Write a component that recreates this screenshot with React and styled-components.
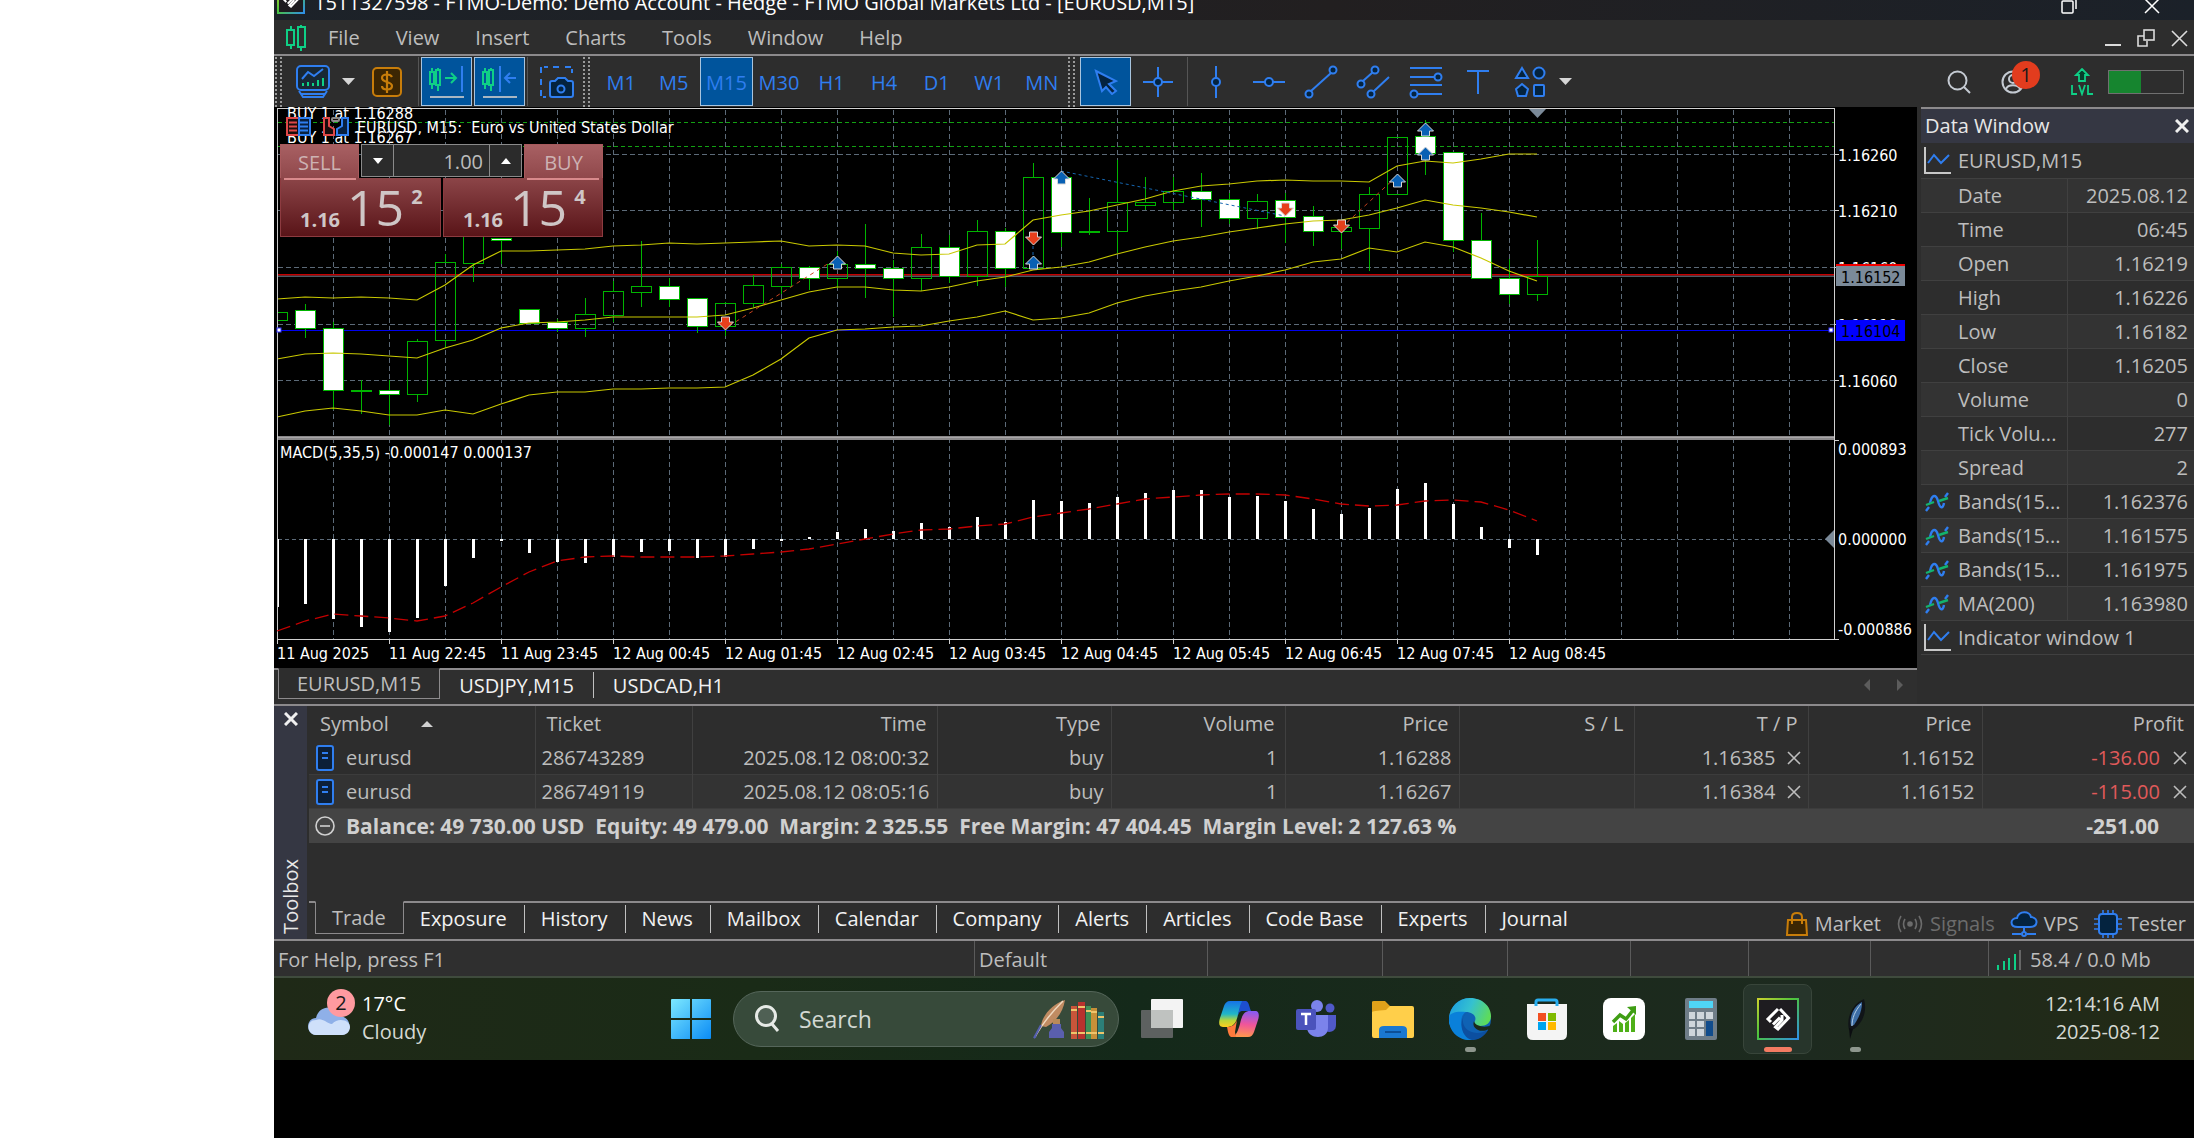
import React from "react";
import styled, { createGlobalStyle, css } from "styled-components";

const UI = `"Open Sans", "Noto Sans", sans-serif`;
const CHART = `"DejaVu Sans Condensed", "DejaVu Sans", sans-serif`;
const C = {
  panel: "#2d2d2d",
  panelAlt: "#333333",
  caption: "#353743",
  line: "#8c8a8c",
  thin: "#404040",
  text: "#bdbdbd",
  bright: "#f2f2f2",
  blue: "#2f7ef0",
  blueFill: "#04233f",
  active: "#00549c",
  green: "#0fcf86",
};

const Global = createGlobalStyle`
  * { box-sizing: border-box; }
  body { margin: 0; background: #fff; font: 20px/28px ${UI}; color: ${C.text}; }
  button, input { font: inherit; color: inherit; margin: 0; padding: 0; border: 0; background: none; border-radius: 0; }
  button { cursor: pointer; }
  a { color: inherit; text-decoration: none; }
  svg { display: block; flex: none; }
  table { border-collapse: collapse; border-spacing: 0; }
  th { font-weight: 400; }
`;

const Shell = styled.div`
  display: flex;
  flex-direction: column;
  min-height: 100vh;
  margin-left: 274px;
  background: #000;
`;

/* ---------- title and menu ---------- */
const TitleBar = styled.header`
  display: flex;
  align-items: flex-end;
  height: 20px;
  padding: 0 30px 6px 3px;
  gap: 9px;
  overflow: hidden;
  color: #fff;
  background: linear-gradient(90deg, #1c2229, #221f20 55%, #1b2129);
`;
const TitleText = styled.span`
  flex: 1;
  line-height: 22px;
  white-space: pre;
`;
const WindowButton = styled.button`
  display: flex;
  padding: 0 4px;
`;
const WindowButtons = styled.div`
  display: flex;
  align-items: flex-end;
  gap: 58px;
`;
const MenuBar = styled.nav`
  display: flex;
  align-items: center;
  height: 36px;
  padding: 2px 6px 0 12px;
  background: ${C.panel};
  border-bottom: 2px solid ${C.line};
`;
const MenuItems = styled.div`
  display: flex;
  flex: 1;
  gap: 36px;
  padding-left: 22px;
`;
const MdiButtons = styled.div`
  display: flex;
  align-items: center;
  gap: 16px;
`;

/* ---------- toolbar ---------- */
const ToolBar = styled.div`
  display: flex;
  align-items: center;
  height: 51px;
  padding: 0 10px 0 1px;
  background: ${C.panel};
`;
const Grip = styled.span`
  width: 7px;
  height: 50px;
  border: 2px dotted #9a9a9a;
  border-width: 0 2px;
  margin: 0 ${(p) => p.$after || 0}px 0 ${(p) => p.$before || 0}px;
`;
const Tool = styled.button`
  display: flex;
  align-items: center;
  justify-content: center;
  height: 49px;
  width: ${(p) => p.$w || 52}px;
  padding-top: ${(p) => (p.$text ? 2 : 0)}px;
  color: ${C.blue};
  border: 1px solid transparent;
  ${(p) => p.$active && css`
    background: ${C.active};
    border-color: #a8c4de;
  `}
`;
const ToolPair = styled.div`
  display: flex;
  gap: 2px;
`;
const Divider = styled.span`
  width: 1px;
  height: 49px;
  margin: 0 2px;
  background: #555;
`;
const EvenTools = styled.div`
  display: grid;
  grid-template-columns: repeat(${(p) => p.$n}, 1fr);
  width: ${(p) => p.$w}px;
  ${Tool} { width: 100%; }
`;
const ToolsEnd = styled.div`
  display: flex;
  align-items: center;
  margin-left: auto;
  gap: 15px;
`;
const Badged = styled.button`
  position: relative;
  display: flex;
  margin: 0 31px 0 15px;
`;
const Badge = styled.span`
  position: absolute;
  top: ${(p) => p.$top}px;
  left: ${(p) => p.$left}px;
  width: 28px;
  height: 28px;
  border-radius: 50%;
  text-align: center;
  background: ${(p) => p.$bg};
  color: #1a1a1a;
`;
const Meter = styled.span`
  width: 76px;
  height: 24px;
  border: 1px solid #707070;
  background: linear-gradient(90deg, #16852f 43%, transparent 43%);
`;

/* ---------- workspace ---------- */
const Workspace = styled.main`
  display: grid;
  grid-template-columns: minmax(0, 1fr) 273px;
  gap: 4px;
  background: ${C.panel};
`;
const ChartColumn = styled.section`
  position: relative;
  background: #000;
`;
const ChartSvg = styled.svg`
  width: 100%;
  height: 561px;
  text { font: 16px ${CHART}; fill: #fff; }
`;
const ChartTabs = styled.div`
  display: flex;
  align-items: flex-start;
  height: 36px;
  background: #2f2f2f;
`;
const TabGap = styled.span`
  width: ${(p) => p.$w ? p.$w + "px" : "auto"};
  flex: ${(p) => (p.$w ? "none" : 1)};
  border-top: 2px solid ${C.line};
  align-self: flex-start;
`;
const ChartTab = styled.button`
  height: ${(p) => (p.$active ? 31 : 34)}px;
  padding: 0 19px;
  border-top: 2px solid ${C.line};
  color: ${C.bright};
  ${(p) => p.$active && css`
    padding: 1px 18px 0;
    color: ${C.text};
    background: ${C.panel};
    border: 1px solid ${C.line};
    border-top-color: transparent;
  `}
`;
const TabRule = styled.span`
  width: 1px;
  height: ${(p) => p.$h}px;
  background: linear-gradient(${C.line} 2px, transparent 2px 4px, #c0c0c0 4px);
`;
const TabScroll = styled.div`
  display: flex;
  gap: 27px;
  padding: 9px 14px 0 0;
  border-top: 2px solid ${C.line};
`;

/* one-click trading panel lies over the chart */
const OneClick = styled.form`
  position: absolute;
  top: 37px;
  left: 6px;
  width: 323px;
  color: #cfc6c6;
`;
const OneClickTop = styled.div`
  display: grid;
  grid-template-columns: 79px 1fr 79px;
  gap: 2px;
  height: 34px;
`;
const SideTab = styled.button`
  height: 34px;
  padding-top: 2px;
  color: #cdb2b3;
  border: 1px solid #a85a5d;
  border-bottom: 0;
  background: linear-gradient(#a86063, #90484b);
`;
const Spinner = styled.div`
  display: grid;
  grid-template-columns: 31px 1fr 31px;
  height: 33px;
  border: 1px solid #8a8a8a;
  background: #2b2b2b;
`;
const SpinButton = styled.button`
  display: flex;
  align-items: center;
  justify-content: center;
`;
const Lots = styled.input`
  width: 100%;
  min-width: 0;
  padding: 2px 6px 0 0;
  text-align: right;
  color: ${C.text};
  border: 1px solid #8a8a8a;
  border-width: 0 1px;
`;
const OneClickPrices = styled.div`
  display: grid;
  grid-template-columns: 161px 160px;
  gap: 2px;
`;
const PriceButton = styled.button`
  display: flex;
  align-items: flex-end;
  height: 59px;
  padding: 0 0 0 19px;
  gap: 7px;
  border: 1px solid #8d3b40;
  border-top: 0;
  background:
    linear-gradient(#d98a8c, #d98a8c) ${(p) => (p.$right ? "calc(100% - 3px)" : "3px")} 0 / 72px 2px no-repeat,
    linear-gradient(#8c4548, #591418);
  font-weight: 700;
`;
const PriceSmall = styled.span`
  line-height: 32px;
`;
const PriceBig = styled.span`
  font-size: 50px;
  line-height: 58px;
  font-weight: 400;
`;
const PriceSup = styled.span`
  align-self: flex-start;
  line-height: 38px;
`;

/* ---------- data window ---------- */
const DataWindow = styled.aside`
  display: flex;
  flex-direction: column;
  background: ${C.panel};
`;
const Caption = styled.div`
  display: flex;
  align-items: center;
  justify-content: space-between;
  height: 37px;
  padding: 0 5px 0 4px;
  color: #e8e8e8;
  background: ${C.caption};
  border-top: 2px solid ${C.line};
  border-bottom: 1px solid ${C.panel};
`;
const DataTable = styled.table`
  width: 100%;
  table-layout: fixed;
  tr { height: 34px; border-bottom: 1px solid ${C.thin}; }
  tr:nth-child(even) { background: ${C.panelAlt}; }
  th { text-align: left; }
`;
const DataCell = styled.td`
  padding: 1px 6px 0 0;
  text-align: right;
  border-left: 1px solid ${C.thin};
`;
const DataHead = styled.th`
  padding: 1px 0 0 3px;
`;
const HeadInner = styled.span`
  display: grid;
  grid-template-columns: 27px 1fr;
  gap: 7px;
  align-items: center;
  white-space: nowrap;
`;

/* ---------- toolbox ---------- */
const Toolbox = styled.section`
  display: grid;
  grid-template-columns: 33px minmax(0, 1fr);
  gap: 2px;
  height: 235px;
  background: ${C.panel};
  border-top: 2px solid ${C.line};
`;
const Strip = styled.div`
  display: flex;
  flex-direction: column;
  align-items: center;
  justify-content: space-between;
  padding: 6px 0 5px;
  color: #e8e8e8;
  background: ${C.caption};
`;
const Vertical = styled.span`
  writing-mode: vertical-rl;
  transform: rotate(180deg);
`;
const ToolboxBody = styled.div`
  display: flex;
  flex-direction: column;
  justify-content: space-between;
`;
const Trades = styled.table`
  width: 100%;
  table-layout: fixed;
  tr { height: 34px; }
  tbody tr:nth-child(even) { background: ${C.panelAlt}; }
  tbody tr { border-bottom: 1px solid #3c3c3c; }
`;
const Th = styled.th`
  padding: 2px 10px 0 11px;
  text-align: ${(p) => (p.$left ? "left" : "right")};
  & + & { border-left: 1px solid ${C.thin}; }
`;
const Td = styled.td`
  padding: 2px 7px 0 6px;
  text-align: ${(p) => (p.$left ? "left" : "right")};
  color: ${(p) => (p.$loss ? "#e05a5a" : "inherit")};
  & + & { border-left: 1px solid ${C.thin}; }
`;
const Inline = styled.span`
  display: flex;
  align-items: center;
  justify-content: ${(p) => (p.$end ? "flex-end" : "flex-start")};
  gap: ${(p) => p.$gap || 8}px;
`;
const Summary = styled.tfoot`
  background: #444;
  font-size: 21px;
  font-weight: 700;
  color: #d0d0d0;
  tr { height: 35px; }
  td { padding: 0 35px 0 6px; text-align: right; white-space: pre; }
`;
const CloseMark = styled.button`
  display: flex;
  color: ${C.text};
`;
const BottomTabs = styled.div`
  display: flex;
  height: 38px;
  align-items: flex-start;
  background: #2d2d2d;
`;
const BottomTab = styled.button`
  height: ${(p) => (p.$active ? 33 : 36)}px;
  padding: 0 17px 2px 16px;
  color: ${C.bright};
  border-top: 2px solid ${C.line};
  ${(p) => p.$active && css`
    padding-bottom: 0;
    color: ${C.text};
    border: 1px solid ${C.line};
    border-top-color: transparent;
  `}
`;
const Services = styled.div`
  display: flex;
  flex: 1;
  justify-content: flex-end;
  gap: 15px;
  padding: 7px 8px 0 0;
  border-top: 2px solid ${C.line};
`;
const Service = styled.a`
  display: flex;
  align-items: center;
  gap: 6px;
  color: ${(p) => (p.$off ? "#6c6c6c" : C.text)};
`;

/* ---------- status ---------- */
const Status = styled.footer`
  display: grid;
  grid-template-columns: 700px 233px 175px 125px 123px 118px 122px 118px 1fr;
  height: 39px;
  background: #2f2f2f;
  border-top: 2px solid ${C.line};
  border-bottom: 2px solid #3f4b3d;
`;
const StatusCell = styled.span`
  display: flex;
  align-items: center;
  gap: 9px;
  padding: 2px 0 0 ${(p) => p.$pad || 4}px;
  & + & { border-left: 1px solid #5a5a5a; }
`;

/* ---------- taskbar ---------- */
const TaskBar = styled.nav`
  display: flex;
  align-items: center;
  height: 82px;
  padding: 0 34px;
  color: #fff;
  background: linear-gradient(90deg, #1f2917, #1a2b17 25%, #14291a 45%, #1b2a1c 65%, #1d2a1f 80%, #232a15);
`;
const Weather = styled.button`
  display: flex;
  align-items: center;
  gap: 12px;
  width: 348px;
  text-align: left;
`;
const WeatherIcon = styled.span`
  position: relative;
  width: 42px;
  padding-top: 4px;
`;
const Lines = styled.span`
  display: grid;
  padding-bottom: 2px;
  line-height: 28px;
  color: ${(p) => p.$c || "#d5d9d3"};
  text-align: ${(p) => p.$align || "left"};
  strong { font-weight: 400; color: ${(p) => p.$c || "#fff"}; }
`;
const Apps = styled.div`
  display: flex;
  align-items: center;
  gap: 8px;
`;
const AppTile = styled.button`
  position: relative;
  display: flex;
  align-items: center;
  justify-content: center;
  width: 69px;
  height: 70px;
  border-radius: 8px;
  border: 1px solid ${(p) => (p.$current ? "#38453a" : "transparent")};
  background: ${(p) => (p.$current ? "#27352b" : "none")};
`;
const RunMark = styled.span`
  position: absolute;
  bottom: 1px;
  left: 50%;
  width: ${(p) => (p.$current ? 28 : 11)}px;
  height: 5px;
  margin-left: ${(p) => (p.$current ? -14 : -5)}px;
  border-radius: 3px;
  background: ${(p) => (p.$current ? "#f47b62" : "#8d968d")};
`;
const Search = styled.label`
  display: flex;
  align-items: center;
  gap: 19px;
  width: 386px;
  height: 56px;
  padding: 0 14px 0 20px;
  border-radius: 28px;
  border: 1px solid #55665a;
  background: #374a3a;
`;
const SearchInput = styled.input`
  flex: 1;
  min-width: 0;
  font-size: 23px;
  &::placeholder { color: #d2d8d2; opacity: 1; }
`;
const Clock = styled.div`
  margin-left: auto;
`;

/* ---------- icons ---------- */
const Icon = ({ w, h, children, ...p }) => (
  <svg width={w} height={h} viewBox={`0 0 ${w} ${h}`} fill="none" stroke="currentColor" strokeWidth="2" aria-hidden="true" {...p}>{children}</svg>
);
const Cross = ({ s = 14, sw = 2, ...p }) => (
  <Icon w={s} h={s} strokeWidth={sw} {...p}><path d={`M1 1L${s - 1} ${s - 1}M${s - 1} 1L1 ${s - 1}`} /></Icon>
);
const Caret = ({ c = "#d6d6d6", w = 13, h = 7, dir = "down" }) => {
  const d = { down: `M0 0H${w}L${w / 2} ${h}Z`, up: `M0 ${h}H${w}L${w / 2} 0Z`, left: `M${w} 0V${h}L0 ${h / 2}Z`, right: `M0 0V${h}L${w} ${h / 2}Z` };
  return <Icon w={w} h={h} stroke="none" fill={c}><path d={d[dir]} /></Icon>;
};
const MiniCandles = ({ x = 0, y = 0 }) => (
  <g transform={`translate(${x} ${y})`} stroke={C.green} strokeWidth="2">
    <path d="M3 0V3M3 16V21M9 0V2M9 18V23" /><rect x="1" y="4" width="4" height="12" /><rect x="7" y="2" width="4" height="15" />
  </g>
);
const FtmoMark = ({ w, h, id }) => (
  <Icon w={w} h={h} stroke="none">
    <defs><linearGradient id={id} x1="0" y1="0" x2="1" y2="1"><stop offset="0" stopColor="#c9d22e" /><stop offset=".45" stopColor="#4cc43c" /><stop offset="1" stopColor="#2f8fe8" /></linearGradient></defs>
    <rect x="1" y="1" width={w - 2} height={h - 2} fill="#1e1c20" stroke={`url(#${id})`} strokeWidth="2" />
    <g transform={`translate(${w / 2} ${h / 2}) scale(${w / 42})`} stroke="#fff" strokeWidth="3">
      <path d="M0 -10L-10 0L-7 3M-5 5.500L2 -1.500M2 -10L10.500 -1L0 10L-2.500 8L4 1V-4" />
    </g>
  </Icon>
);

/* ---------- chart data ---------- */
const bx = (k) => 277 + 28 * k;
// [body top, body bottom, wick top, wick bottom, filled]
const candles = [
  [312, 320, 312, 320, 0], [310, 328, 304, 338, 1], [328, 390, 322, 410, 1], [390, 391, 380, 414, 0], [390, 394, 380, 425, 1],
  [341, 394, 339, 402, 0], [262, 340, 254, 348, 0], [200, 263, 200, 282, 0], [238, 240, 238, 264, 1], [309, 323, 309, 324, 1],
  [322, 328, 319, 332, 1], [314, 328, 298, 337, 0], [291, 315, 281, 322, 0], [286, 292, 241, 307, 0], [286, 299, 278, 307, 1],
  [298, 326, 298, 333, 1], [303, 326, 302, 336, 0], [285, 303, 275, 307, 0], [267, 286, 264, 294, 0], [267, 278, 266, 290, 1],
  [264, 278, 251, 288, 0], [264, 268, 224, 298, 1], [268, 278, 260, 317, 1], [247, 278, 234, 291, 0], [247, 276, 235, 283, 1],
  [231, 276, 220, 286, 0], [231, 268, 228, 287, 1], [177, 268, 163, 268, 0], [177, 232, 172, 247, 1], [231, 232, 198, 235, 0],
  [202, 231, 160, 253, 0], [202, 205, 177, 210, 0], [191, 202, 177, 210, 0], [191, 199, 173, 227, 1], [199, 218, 193, 224, 1],
  [201, 218, 194, 229, 0], [200, 217, 193, 243, 1], [216, 231, 206, 246, 1], [227, 231, 220, 249, 0], [194, 228, 187, 271, 0],
  [137, 194, 137, 194, 0], [136, 153, 120, 175, 1], [152, 240, 152, 252, 1], [240, 278, 213, 279, 1], [278, 294, 259, 304, 1], [276, 294, 240, 301, 0],
];
const upper = [299, 297, 298, 297, 298, 300, 285, 265, 251, 251, 250, 249, 246, 245, 243, 244, 243, 242, 241, 246, 245, 246, 253, 255, 254, 245, 244, 220, 215, 211, 205, 199, 191, 186, 184, 181, 180, 181, 181, 182, 166, 161, 163, 159, 154, 154];
const middle = [359, 354, 353, 354, 356, 358, 348, 340, 328, 323, 322, 320, 317, 317, 317, 317, 315, 308, 300, 292, 287, 287, 290, 291, 287, 281, 277, 270, 267, 262, 254, 247, 241, 237, 232, 228, 224, 221, 220, 215, 208, 200, 205, 208, 212, 217];
const lower = [417, 411, 408, 411, 415, 415, 410, 414, 404, 395, 392, 392, 389, 389, 388, 388, 387, 375, 359, 338, 330, 329, 327, 326, 321, 317, 311, 320, 318, 313, 303, 296, 291, 287, 281, 276, 270, 262, 259, 248, 252, 242, 247, 258, 271, 281];
const macd = [607, 604, 619, 627, 632, 618, 586, 558, 541, 553, 562, 563, 557, 552, 551, 558, 557, 549, 541, 537, 532, 529, 531, 523, 527, 517, 522, 500, 501, 503, 497, 493, 490, 490, 497, 496, 501, 509, 514, 508, 489, 483, 504, 527, 548, 555];
const signal = [631, 621, 614, 616, 618, 621, 616, 603, 587, 572, 561, 557, 556, 557, 557, 557, 556, 554, 552, 549, 544, 539, 534, 530, 529, 526, 524, 517, 513, 509, 504, 499, 497, 495, 494, 494, 495, 499, 504, 506, 505, 501, 500, 502, 510, 521];
const line = (ys) => ys.map((y, k) => `${bx(k)},${y}`).join(" ");
const times = ["11 Aug 2025", "11 Aug 22:45", "11 Aug 23:45", "12 Aug 00:45", "12 Aug 01:45", "12 Aug 02:45", "12 Aug 03:45", "12 Aug 04:45", "12 Aug 05:45", "12 Aug 06:45", "12 Aug 07:45", "12 Aug 08:45"];
const deals = [[725, 323, 0], [837, 263, 1], [1061, 178, 1], [1033, 238, 0], [1033, 263, 1], [1285, 209, 0], [1341, 226, 0], [1397, 181, 1], [1425, 130, 1], [1425, 154, 1]];
const priceAxis = [[154, "1.16260"], [210, "1.16210"], [267, "1.16160"], [324, "1.16110"], [380, "1.16060"]];

const Deal = ({ x, y, up }) => (
  <path transform={`translate(${x} ${y})${up ? "" : " scale(1 -1)"}`} d="M0 -7L8 1H4V6H-4V1H-8Z" fill={up ? "#0860b4" : "#e63f1c"} stroke="#d8d8d8" strokeWidth="1" />
);

function Chart() {
  return (
    <ChartSvg viewBox="274 107 1643 561" preserveAspectRatio="xMinYMin meet" role="img" aria-label="EURUSD M15 candlestick chart with MACD">
      <g shapeRendering="crispEdges">
        <g stroke="#5c6a78" strokeWidth="1" strokeDasharray="5 3">
          {Array.from({ length: 27 }, (_, i) => <path key={i} d={`M${333.5 + 56 * i} 110V639`} />)}
          {priceAxis.map(([y]) => <path key={y} d={`M278 ${y + 0.5}H1834`} />)}
          <path d="M278 539.5H1834" strokeDasharray="4 3" />
        </g>
        <g stroke="#12a012" strokeWidth="1" strokeDasharray="4 3"><path d="M278 122.5H1834M278 146.5H1834" /></g>
        <path d="M278 274.5H1834" stroke="#c40000" />
        <path d="M278 275.5H1834" stroke="#6e2024" />
        <path d="M278 276.5H1834" stroke="#4c5a66" />
        <path d="M278 330.5H1834" stroke="#0000f0" />
        <g stroke="#00b400" strokeWidth="1">
          {candles.map(([t, b, wt, wb, f], k) => (
            <g key={k}>
              <path d={`M${bx(k) + 0.5} ${wt}V${t}M${bx(k) + 0.5} ${b}V${wb}`} strokeWidth="1" />
              <rect x={k ? bx(k) - 9.5 : 277.5} y={t + 0.5} width={k ? 20 : 10} height={Math.max(b - t, 1)} fill={f ? "#fff" : "#000"} fillOpacity={f ? 1 : 0} />
            </g>
          ))}
        </g>
      </g>
      <g stroke="#c8c800" strokeWidth="1.2" fill="none">
        {[upper, middle, lower].map((ys, i) => <polyline key={i} points={line(ys)} />)}
      </g>
      <path d="M729 326L837 258M1341 228L1397 176" stroke="#c8431f" strokeDasharray="4 4" />
      <path d="M1061 171L1285 216M1033 246V257" stroke="#1666b0" strokeDasharray="3 3" />
      {deals.map(([x, y, up], i) => <Deal key={i} x={x + 0.5} y={y} up={up} />)}

      <g shapeRendering="crispEdges">
        <g fill="#fff">
          {macd.map((y, k) => <rect key={k} x={k ? bx(k) - 1 : 277} y={Math.min(y, 539)} width={k ? 3 : 2} height={Math.max(Math.abs(y - 539), 1)} />)}
        </g>
        <rect x="277" y="436" width="1558" height="4" fill="#8a888a" />
        <path d="M277 437.5H1835" stroke="#a8a6a8" />
        <path d="M277.5 109V639" stroke="#c8c8c8" />
        <path d="M277 108.5H1835M1834.5 108V640M277 639.5H1839M1834 440.5H1839" stroke="#d0d0d0" />
        <path d="M1834 154.5H1839M1834 210.5H1839M1834 267.5H1839M1834 324.5H1839M1834 380.5H1839" stroke="#d0d0d0" />
        {times.map((t, i) => <path key={t} d={`M${277.5 + 112 * i} 640V644`} stroke="#d0d0d0" />)}
      </g>
      <polyline points={line(signal)} fill="none" stroke="#c40000" strokeWidth="1.3" strokeDasharray="14 6" />
      <path d="M1529 109H1546L1537.500 118Z" fill="#7b8a99" />
      <path d="M1834 530V548L1825 539Z" fill="#7b8a99" />
      <rect x="277" y="328" width="4" height="4" fill="#fff" stroke="#3030ff" />
      <rect x="1829" y="328" width="4" height="4" fill="#fff" stroke="#3030ff" />

      {priceAxis.map(([y, t]) => <text key={t} x="1838" y={y + 7}>{t}</text>)}
      <rect x="1836" y="265" width="69" height="21" fill="#7b8a99" />
      <rect x="1836" y="264" width="69" height="2" fill="#f00000" />
      <text x="1841" y="283" style={{ fill: "#000" }}>1.16152</text>
      <rect x="1836" y="320" width="69" height="21" fill="#0000ff" />
      <text x="1841" y="337" style={{ fill: "#000" }}>1.16104</text>
      <text x="1838" y="455">0.000893</text>
      <text x="1838" y="545">0.000000</text>
      <text x="1838" y="635">-0.000886</text>
      <text x="280" y="458">MACD(5,35,5) -0.000147 0.000137</text>
      {times.map((t, i) => <text key={t} x={277 + 112 * i} y="659">{t}</text>)}

      <text x="287" y="119">BUY 1 at 1.16288</text>
      <text x="287" y="143">BUY 1 at 1.16267</text>
      <g strokeWidth="2" fill="#1a0d0d">
        <path d="M298 118H287V135H298" stroke="#e04848" /><path d="M299 118H310V135H299Z" stroke={C.blue} fill="#082040" />
        <path d="M289 122.500H297M289 126.500H297M289 130.500H297" stroke="#e04848" /><path d="M300 122.500H308M300 126.500H308M300 130.500H308" stroke={C.blue} />
        <path d="M324 118H329V126L334 129V135H324Z" stroke="#e04848" /><path d="M348 118H342V126L337 129V135H348Z" stroke={C.blue} fill="#082040" />
        <rect x="332" y="118" width="7" height="3" rx="1" stroke="#8a8a8a" />
      </g>
      <text x="357" y="133" xmlSpace="preserve">EURUSD, M15:  Euro vs United States Dollar</text>
    </ChartSvg>
  );
}

/* ---------- content ---------- */
const frames = ["M1", "M5", "M15", "M30", "H1", "H4", "D1", "W1", "MN"];
const dataRows = [
  ["Date", "2025.08.12"], ["Time", "06:45"], ["Open", "1.16219"], ["High", "1.16226"], ["Low", "1.16182"], ["Close", "1.16205"],
  ["Volume", "0"], ["Tick Volu...", "277"], ["Spread", "2"], ["Bands(15...", "1.162376", 1], ["Bands(15...", "1.161575", 1], ["Bands(15...", "1.161975", 1], ["MA(200)", "1.163980", 1],
];
const positions = [
  ["286743289", "2025.08.12 08:00:32", "1.16288", "1.16385", "-136.00"],
  ["286749119", "2025.08.12 08:05:16", "1.16267", "1.16384", "-115.00"],
];
const heads = ["Time", "Type", "Volume", "Price", "S / L", "T / P", "Price", "Profit"];
const colWidths = [226, 157, 245, 174, 174, 174, 175, 174, 174];
const bottomTabs = ["Exposure", "History", "News", "Mailbox", "Calendar", "Company", "Alerts", "Articles", "Code Base", "Experts", "Journal"];

const WindowIcon = () => (
  <Icon w={27} h={28} stroke="#c8c8c8"><path d="M1 0V26H27" /><path d="M4 16L10 8L17 16L25 8" stroke={C.blue} /></Icon>
);
const BandIcon = () => (
  <Icon w={26} h={22} strokeWidth="2.400"><path d="M2 20L5 16M6 12C8 3 12 3 14 10C16 18 19 18 20 12M21 6L24 2" stroke={C.blue} /><path d="M2 14L10 11M15 10L24 7" stroke="#13b36d" /></Icon>
);

const drawTools = [
  ["Vertical line", <Icon w={34} h={34} key="v"><path d="M17 1V13M17 21V33" /><circle cx="17" cy="17" r="4" fill={C.blueFill} /></Icon>],
  ["Horizontal line", <Icon w={34} h={34} key="h"><path d="M1 17H13M21 17H33" /><circle cx="17" cy="17" r="4" fill={C.blueFill} /></Icon>],
  ["Trendline", <Icon w={34} h={34} key="t"><path d="M7 26L27 8" /><circle cx="5" cy="29" r="3.500" fill={C.blueFill} /><circle cx="29" cy="5" r="3.500" fill={C.blueFill} /></Icon>],
  ["Channel", <Icon w={34} h={34} key="c"><path d="M7 16L17 7M17 27L33 12" /><circle cx="5" cy="19" r="3.500" fill={C.blueFill} /><circle cx="19" cy="5" r="3.500" fill={C.blueFill} /><circle cx="15" cy="29" r="3.500" fill={C.blueFill} /></Icon>],
  ["Fibonacci", <Icon w={34} h={34} key="f"><path d="M1 3H33M1 12H25M1 20H33M9 29H33" /><circle cx="29" cy="12" r="3.500" fill={C.blueFill} /><circle cx="5" cy="29" r="3.500" fill={C.blueFill} /></Icon>],
  ["Text", <Icon w={34} h={34} key="x"><path d="M6 6H28M17 6V29" /></Icon>],
  ["Shapes", <Icon w={34} h={34} key="s" fill={C.blueFill}><path d="M8 3L14 13H2ZM8 19L14 24L12 31H4L2 24Z" /><circle cx="25" cy="8" r="5.500" /><rect x="20" y="20" width="10" height="11" rx="1" /></Icon>],
];

const appIcons = [
  ["Task View", <Icon w={42} h={42} key="a" stroke="none"><rect x="0" y="12" width="32" height="28" rx="1" fill="#5d6160" /><rect x="10" y="1" width="32" height="29" rx="1" fill="#f3f3f3" /><rect x="10" y="12" width="22" height="18" fill="#bfc2c0" /></Icon>],
  ["Copilot", <Icon w={42} h={42} key="b" stroke="none">
    <defs>
      <linearGradient id="cp1" x1="0" y1="0" x2="0" y2="1"><stop offset="0" stopColor="#1672e8" /><stop offset=".5" stopColor="#1fb6c8" /><stop offset=".75" stopColor="#b9d53a" /><stop offset="1" stopColor="#ffcf1f" /></linearGradient>
      <linearGradient id="cp2" x1="0.400" y1="0" x2="0.300" y2="1"><stop offset="0" stopColor="#8a5bf0" /><stop offset=".5" stopColor="#f0559a" /><stop offset="1" stopColor="#ff9a4a" /></linearGradient>
    </defs>
    <path d="M12 3H27C23 5 22 10 20 17C18 25 16 28 10 29H5C0 29 1 23 2 20L6 8C7 5 9 3 12 3Z" fill="url(#cp1)" />
    <path d="M24 3H28C31 4 31 8 33 13H24C21 13 20 17 19 20L22 8C23 5 24 4 24 3Z" fill="#1d4fd0" />
    <path d="M30 39H14C18 38 20 33 22 26C24 17 26 13 32 13H37C42 13 41 19 40 22L36 34C35 37 33 39 30 39Z" fill="url(#cp2)" />
    <path d="M18 39H13C10 37 10 33 9 29C14 29 17 27 19 22L17 34Z" fill="#ff7a3c" />
  </Icon>],
  ["Teams", <Icon w={42} h={42} key="c" stroke="none"><circle cx="22" cy="8" r="6" fill="#7b83eb" /><circle cx="35" cy="10" r="4.500" fill="#5059c9" /><path d="M30 17H41V27C41 34 34 35 31 33Z" fill="#5059c9" /><path d="M12 17H33V30C33 42 13 42 12 30Z" fill="#7b83eb" /><rect x="1" y="11" width="20" height="21" rx="2" fill="#4b53bc" /><path d="M6 16H16M11 16V27" stroke="#fff" strokeWidth="2.500" /></Icon>],
  ["File Explorer", <Icon w={42} h={42} key="d" stroke="none"><path d="M0 4Q0 3 2 3H13L18 8H38V14H0Z" fill="#e0a11a" /><path d="M0 14Q0 13 14 12L18 8H40Q42 8 42 10V38Q42 40 40 40H2Q0 40 0 38Z" fill="#ffcf4a" /><path d="M7 40V32Q7 28 12 28H30Q35 28 35 32V40Z" fill="#1a78d0" /><path d="M13 34H29" stroke="#0c4f96" strokeWidth="2" /></Icon>],
  ["Edge", <Icon w={42} h={42} key="e" stroke="none">
    <defs><linearGradient id="ed1" x1="0" y1="0.200" x2="1" y2="0.500"><stop offset="0" stopColor="#1b9de2" /><stop offset=".5" stopColor="#35c1d0" /><stop offset="1" stopColor="#5edb5a" /></linearGradient></defs>
    <circle cx="21" cy="21" r="21" fill="#0f62b4" />
    <path d="M0 20C1 8 10 0 21 0C34 0 42 9 42 18C42 25 37 28 31 28C26 28 24 26 26 23C28 18 23 14 17 14C9 14 2 20 0 27Z" fill="url(#ed1)" />
    <path d="M0 20C0 14 9 13 17 14C11 17 11 28 15 34C18 38 22 41 25 42C10 44 -1 33 0 20Z" fill="#0a80da" />
    <path d="M17 15C10 22 15 35 28 35C33 35 36 33 39 32C35 39 29 42 23 42C14 40 8 26 17 15Z" fill="#0c4fa0" />
    <path d="M25 23C22 30 31 36 40 31L42 27C38 30 26 29 25 23Z" fill="#1b2a1c" />
  </Icon>, 1],
  ["Microsoft Store", <Icon w={42} h={42} key="f" stroke="none"><path d="M10 10V4Q10 2 12 2H29Q31 2 31 4V10" stroke="#29aef0" strokeWidth="3" /><path d="M1 6H41V36Q41 42 35 42H7Q1 42 1 36Z" fill="#f4f4f4" /><path d="M10 6V8M31 6V8" stroke="#29aef0" strokeWidth="3" /><path d="M12 15H20V23H12Z" fill="#f25022" /><path d="M22 15H30V23H22Z" fill="#7fba00" /><path d="M12 24H20V32H12Z" fill="#00a4ef" /><path d="M22 24H30V32H22Z" fill="#ffb900" /></Icon>],
  ["Trading app", <Icon w={42} h={42} key="g" stroke="none"><rect width="42" height="42" rx="8" fill="#fff" /><path d="M10 24L17 17L23 21L31 11" stroke="#3f9e14" strokeWidth="3.500" /><path d="M24 9L33 8V17Z" fill="#3f9e14" /><path d="M10 34V28L14 25V34ZM16 34V23L20 26V34ZM22 34V25L26 22V34ZM28 34V20L32 16V34Z" fill="#4fb018" /></Icon>],
  ["Calculator", <Icon w={32} h={42} key="h" stroke="none"><rect width="32" height="42" rx="2" fill="#6f7d88" /><rect x="4" y="3" width="24" height="7" fill="#4fd5f7" /><path d="M4 14H10V21H4ZM12 14H19V21H12ZM21 14H28V21H21ZM4 23H10V29H4ZM12 23H19V29H12ZM4 31H10V38H4ZM12 31H19V38H12Z" fill="#cfd6dc" /><rect x="21" y="23" width="7" height="15" fill="#114c8c" /></Icon>],
  ["MetaTrader", <FtmoMark key="i" w={42} h={42} id="fm2" />, 2],
  ["Quill", <Icon w={22} h={42} key="j" stroke="none"><path d="M20 1C23 12 20 24 10 31L5 32C2 20 8 6 20 1Z" fill="#101418" /><path d="M18 4C10 8 5 18 7 28L10 27C16 18 18 12 18 4Z" fill="#3d6ea6" /><path d="M17 6C11 13 8 20 8 28" stroke="#b5cfe6" strokeWidth="1" /><path d="M5 30L6 41L9 31Z" fill="#0b0d10" /></Icon>, 1],
];

export default function App() {
  return (
    <>
      <Global />
      <Shell>
        <TitleBar>
          <FtmoMark w={28} h={28} id="fm1" />
          <TitleText>1511327598 - FTMO-Demo: Demo Account - Hedge - FTMO Global Markets Ltd - [EURUSD,M15]</TitleText>
          <WindowButtons>
            <WindowButton aria-label="Restore window"><Icon w={17} h={17} strokeWidth="1.500"><rect x="1" y="4" width="11" height="12" rx="1" /><path d="M5 1H13Q15 1 15 4V12" /></Icon></WindowButton>
            <WindowButton aria-label="Close window"><Cross s={16} sw={1.5} /></WindowButton>
          </WindowButtons>
        </TitleBar>

        <MenuBar aria-label="Menu">
          <Icon w={20} h={26} stroke={C.green}><path d="M5 1V5M5 20V24M15 0V2M15 22V26" /><rect x="1" y="5" width="7" height="15" /><rect x="12" y="2" width="7" height="20" /></Icon>
          <MenuItems>{["File", "View", "Insert", "Charts", "Tools", "Window", "Help"].map((m) => <button key={m}>{m}</button>)}</MenuItems>
          <MdiButtons>
            <button aria-label="Minimize chart"><Icon w={16} h={16} stroke="#dcdcdc"><path d="M0 15H16" /></Icon></button>
            <button aria-label="Restore chart"><Icon w={18} h={18} stroke="#dcdcdc" strokeWidth="1.600"><path d="M7 7H1V17H10V12" /><rect x="7" y="1" width="10" height="10" /></Icon></button>
            <button aria-label="Close chart"><Cross s={17} sw={1.6} color="#dcdcdc" /></button>
          </MdiButtons>
        </MenuBar>

        <ToolBar>
          <Grip $after={5} />
          <Tool $w={51} aria-label="Chart type">
            <Icon w={34} h={34}><rect x="1" y="1" width="32" height="24" rx="4" fill={C.blueFill} fillOpacity=".5" /><path d="M3 26L7 32H27L31 26M5 29H29" /><path d="M6 14L12 7L18 11L27 4" /><path d="M7 21V18M12 21V17M17 21V18M22 21V15M27 21V13" stroke={C.green} /></Icon>
          </Tool>
          <Tool $w={20} aria-label="Chart type menu"><Caret /></Tool>
          <Tool $w={58} aria-label="Symbols">
            <Icon w={30} h={30} stroke="#c87d0a"><rect x="1" y="1" width="28" height="28" rx="4" fill="#3c2603" /><path d="M20 10C19 8 17 7.500 15 7.500C12 7.500 10 9 10 11C10 16 20 14 20 19C20 21.500 18 22.500 15 22.500C12 22.500 10 21 10 19M15 4V26" strokeWidth="2.200" /></Icon>
          </Tool>
          <Divider />
          <ToolPair>
            <Tool $w={51} $active aria-label="Auto scroll"><Icon w={36} h={34}><MiniCandles y={3} /><path d="M16 13H27M22 8L27 13L22 18" stroke={C.green} /><path d="M33 1V27" /><path d="M1 32H35" stroke="#a9b6c2" /></Icon></Tool>
            <Tool $w={51} $active aria-label="Chart shift"><Icon w={36} h={34}><MiniCandles y={3} /><path d="M18 1V27M34 13H23M28 8L23 13L28 18" /><path d="M1 32H35" stroke="#a9b6c2" /></Icon></Tool>
          </ToolPair>
          <Divider />
          <Tool $w={53} aria-label="Screenshot">
            <Icon w={34} h={34}><path d="M1 8V2H8M13 2H20M25 2H32V8M1 14V20M1 25V32H6" strokeDasharray="6 3" /><path d="M10 18Q10 16 12 16H15L18 13H25L28 16H31Q33 16 33 18V30Q33 32 31 32H12Q10 32 10 30Z" fill={C.blueFill} /><circle cx="21" cy="24" r="3.500" /></Icon>
          </Tool>
          <Grip $after={5} />
          <EvenTools $n={9} $w={473}>
            {frames.map((f) => <Tool key={f} $text $active={f === "M15"}>{f}</Tool>)}
          </EvenTools>
          <Grip $after={5} />
          <Tool $w={51} $active aria-label="Cursor"><Icon w={24} h={26}><path d="M2 2L22 12L15 15L22 22L18 25L12 18L8 22Z" fill={C.blueFill} /></Icon></Tool>
          <Tool $w={54} aria-label="Crosshair"><Icon w={30} h={30}><path d="M15 0V11M15 19V30M0 15H11M19 15H30" /><circle cx="15" cy="15" r="4" fill={C.blueFill} /></Icon></Tool>
          <Divider />
          <EvenTools $n={7} $w={367}>
            {drawTools.map(([label, icon]) => <Tool key={label} aria-label={label}>{icon}</Tool>)}
          </EvenTools>
          <Tool $w={16} aria-label="More shapes"><Caret /></Tool>
          <ToolsEnd>
            <button aria-label="Search"><Icon w={24} h={24} stroke="#c4cad2"><circle cx="10.500" cy="10.500" r="9" /><path d="M17 17L23 23" /></Icon></button>
            <Badged aria-label="Account, 1 notification">
              <Icon w={24} h={24} stroke="#c4cad2"><circle cx="12" cy="12" r="10.500" /><circle cx="12" cy="9" r="4" /><path d="M5 19C7 14 17 14 19 19" /></Icon>
              <Badge $top={-9} $left={11} $bg="#e23c1e">1</Badge>
            </Badged>
            <button aria-label="Level"><Icon w={22} h={28} stroke={C.green}><path d="M11 1L17 7H14V13H8V7H5Z" fill="#053d2b" strokeWidth="1.800" /><path d="M1 17V26H6M8 17L11 26L14 17M17 17V26H22" strokeWidth="1.800" /></Icon></button>
            <Meter />
          </ToolsEnd>
        </ToolBar>

        <Workspace>
          <ChartColumn>
            <Chart />
            <OneClick onSubmit={(e) => e.preventDefault()}>
              <OneClickTop>
                <SideTab type="button">SELL</SideTab>
                <Spinner>
                  <SpinButton type="button" aria-label="Decrease volume"><Caret c="#fff" w={10} h={6} /></SpinButton>
                  <Lots aria-label="Volume" defaultValue="1.00" />
                  <SpinButton type="button" aria-label="Increase volume"><Caret c="#fff" w={10} h={6} dir="up" /></SpinButton>
                </Spinner>
                <SideTab type="button">BUY</SideTab>
              </OneClickTop>
              <OneClickPrices>
                <PriceButton type="button"><PriceSmall>1.16</PriceSmall><PriceBig>15</PriceBig><PriceSup>2</PriceSup></PriceButton>
                <PriceButton type="button" $right><PriceSmall>1.16</PriceSmall><PriceBig>15</PriceBig><PriceSup>4</PriceSup></PriceButton>
              </OneClickPrices>
            </OneClick>
            <ChartTabs>
              <TabGap $w={4} />
              <ChartTab $active>EURUSD,M15</ChartTab>
              <ChartTab>USDJPY,M15</ChartTab>
              <TabRule $h={30} />
              <ChartTab>USDCAD,H1</ChartTab>
              <TabGap />
              <TabScroll>
                <button aria-label="Previous tab"><Caret c="#5c5c5c" w={6} h={12} dir="left" /></button>
                <button aria-label="Next tab"><Caret c="#5c5c5c" w={6} h={12} dir="right" /></button>
              </TabScroll>
            </ChartTabs>
          </ChartColumn>

          <DataWindow>
            <Caption>Data Window<CloseMark aria-label="Close data window"><Cross s={14} sw={3} color="#f0f0f0" /></CloseMark></Caption>
            <DataTable>
              <colgroup><col /><col style={{ width: 126 }} /></colgroup>
              <tbody>
                <tr><DataHead colSpan={2}><HeadInner><WindowIcon />EURUSD,M15</HeadInner></DataHead></tr>
                {dataRows.map(([k, v, icon], i) => (
                  <tr key={i}><DataHead scope="row"><HeadInner>{icon ? <BandIcon /> : <span />}{k}</HeadInner></DataHead><DataCell>{v}</DataCell></tr>
                ))}
                <tr><DataHead colSpan={2}><HeadInner><WindowIcon />Indicator window 1</HeadInner></DataHead></tr>
              </tbody>
            </DataTable>
          </DataWindow>
        </Workspace>

        <Toolbox>
          <Strip><CloseMark aria-label="Close toolbox"><Cross s={14} sw={3} color="#f0f0f0" /></CloseMark><Vertical>Toolbox</Vertical></Strip>
          <ToolboxBody>
            <Trades>
              <colgroup>{colWidths.map((w, i) => <col key={i} style={{ width: w }} />)}<col /></colgroup>
              <thead>
                <tr>
                  <Th $left><Inline $gap={32}>Symbol<Caret c="#d0d0d0" w={12} h={6} dir="up" /></Inline></Th>
                  <Th $left>Ticket</Th>
                  {heads.map((h, i) => <Th key={i}>{h}</Th>)}
                </tr>
              </thead>
              <tbody>
                {positions.map(([ticket, time, price, tp, profit]) => (
                  <tr key={ticket}>
                    <Td $left><Inline $gap={11}><Icon w={20} h={26} stroke={C.blue}><rect x="2" y="1" width="16" height="24" rx="2" fill="#0c1f38" /><path d="M7 8H13M7 13H13" /></Icon>eurusd</Inline></Td>
                    <Td $left>{ticket}</Td><Td>{time}</Td><Td>buy</Td><Td>1</Td><Td>{price}</Td><Td />
                    <Td><Inline $end $gap={11}>{tp}<CloseMark aria-label="Remove take profit"><Cross s={14} sw={1.6} /></CloseMark></Inline></Td>
                    <Td>1.16152</Td>
                    <Td $loss><Inline $end $gap={13}>{profit}<CloseMark aria-label="Close position"><Cross s={14} sw={1.6} /></CloseMark></Inline></Td>
                  </tr>
                ))}
              </tbody>
              <Summary>
                <tr>
                  <td colSpan={9}><Inline $gap={11}><Icon w={20} h={20} stroke="#d0d0d0" strokeWidth="1.600"><circle cx="10" cy="10" r="9" /><path d="M5 10H15" /></Icon>{"Balance: 49 730.00 USD  Equity: 49 479.00  Margin: 2 325.55  Free Margin: 47 404.45  Margin Level: 2 127.63 %"}</Inline></td>
                  <td>-251.00</td>
                </tr>
              </Summary>
            </Trades>
            <BottomTabs>
              <TabGap $w={6} />
              <BottomTab $active>Trade</BottomTab>
              {bottomTabs.map((t, i) => (
                <React.Fragment key={t}>{i > 0 && <TabRule $h={32} />}<BottomTab>{t}</BottomTab></React.Fragment>
              ))}
              <Services>
                <Service href="#market"><Icon w={24} h={24} stroke="#c87d0a"><path d="M3 8H21L22 23H2Z" fill="#3c2603" /><path d="M7 12V5Q7 1 12 1Q17 1 17 5V12" /></Icon>Market</Service>
                <Service href="#signals" $off><Icon w={28} h={20} strokeWidth="1.600"><circle cx="14" cy="10" r="2" fill="currentColor" /><path d="M9 5Q6 10 9 15M19 5Q22 10 19 15M5 2Q0 10 5 18M23 2Q28 10 23 18" /></Icon>Signals</Service>
                <Service href="#vps"><Icon w={28} h={26} stroke={C.blue}><path d="M8 16C-1 16 0 7 7 7C9 -1 20 0 21 6C29 7 28 16 20 16Z" fill={C.blueFill} /><path d="M14 16V21M2 23H11M17 23H26" /><circle cx="14" cy="23" r="2" /></Icon>VPS</Service>
                <Service href="#tester"><Icon w={28} h={28} stroke={C.blue}><path d="M9 0V28M14 0V28M19 0V28M0 9H28M0 14H28M0 19H28" strokeWidth="1.600" /><rect x="5" y="4" width="18" height="20" rx="3" fill={C.blueFill} /></Icon>Tester</Service>
              </Services>
            </BottomTabs>
          </ToolboxBody>
        </Toolbox>

        <Status>
          <StatusCell>For Help, press F1</StatusCell>
          <StatusCell>Default</StatusCell>
          {[0, 1, 2, 3, 4, 5].map((i) => <StatusCell key={i} />)}
          <StatusCell $pad={8}><Icon w={24} h={20} stroke={C.green} strokeWidth="2"><path d="M1 20V15M7 20V11M12 20V8M18 20V4" /><path d="M23 20V0" stroke="#666" /></Icon>58.4 / 0.0 Mb</StatusCell>
        </Status>

        <TaskBar aria-label="Taskbar">
          <Weather>
            <WeatherIcon>
              <Icon w={42} h={28} stroke="none"><path d="M8 28C-3 27 -2 11 8 11C11 -2 28 -3 31 9C44 9 45 27 34 28Z" fill="#8fb0e8" /><path d="M8 28C-2 27 -2 13 8 13C14 10 18 16 24 17C30 10 42 13 42 20C42 25 38 28 34 28Z" fill="#cfe0fa" /></Icon>
              <Badge $top={-14} $left={19} $bg="#ff9aa0">2</Badge>
            </WeatherIcon>
            <Lines><strong>17°C</strong>Cloudy</Lines>
          </Weather>
          <Apps>
            <AppTile aria-label="Start">
              <Icon w={40} h={40} stroke="none">
                <defs><linearGradient id="win" x1="0" y1="0" x2="1" y2="1"><stop offset="0" stopColor="#7ce8ff" /><stop offset="1" stopColor="#0b8cf5" /></linearGradient></defs>
                <path d="M0 1Q0 0 1 0H19V19H0ZM21 0H39Q40 0 40 1V19H21ZM0 21H19V40H1Q0 40 0 39ZM21 21H40V39Q40 40 39 40H21Z" fill="url(#win)" />
              </Icon>
            </AppTile>
            <Search>
              <Icon w={26} h={28} stroke="#e6eae6" strokeWidth="3"><circle cx="12" cy="11" r="9.500" fill="#4f6054" /><path d="M18 19L24 26" /></Icon>
              <SearchInput placeholder="Search" aria-label="Search" />
              <Icon w={72} h={42} stroke="none">
                <path d="M33 2C20 6 10 18 9 28L14 29C24 24 31 14 33 2Z" fill="#c08b62" /><path d="M31 3C20 14 11 24 3 39" stroke="#f0d9c0" strokeWidth="1.500" /><path d="M9 27L2 40L4 38" stroke="#5560b0" strokeWidth="2" />
                <rect x="21" y="21" width="7" height="6" fill="#b98a5a" /><path d="M20 26H29V30L32 34V40H17V34L20 30Z" fill="#5a5fae" />
                <rect x="39" y="8" width="6" height="33" fill="#c8553a" /><rect x="46" y="4" width="7" height="37" fill="#b8322e" /><rect x="54" y="8" width="5" height="33" fill="#3f8f56" /><rect x="59" y="10" width="6" height="31" fill="#c79038" /><rect x="66" y="14" width="6" height="27" fill="#2c7f78" />
                <path d="M39 12H45M39 35H45M46 9H53M46 35H53M54 13H59M54 35H59M59 14H65M59 35H65M66 19H72M66 35H72" stroke="#efc46a" strokeWidth="2" />
              </Icon>
            </Search>
            {appIcons.map(([label, icon, run]) => (
              <AppTile key={label} aria-label={label} $current={run === 2}>{icon}{run ? <RunMark $current={run === 2} /> : null}</AppTile>
            ))}
          </Apps>
          <Clock><Lines $align="right" $c="#d5d9d3"><strong>12:14:16 AM</strong>2025-08-12</Lines></Clock>
        </TaskBar>
      </Shell>
    </>
  );
}
